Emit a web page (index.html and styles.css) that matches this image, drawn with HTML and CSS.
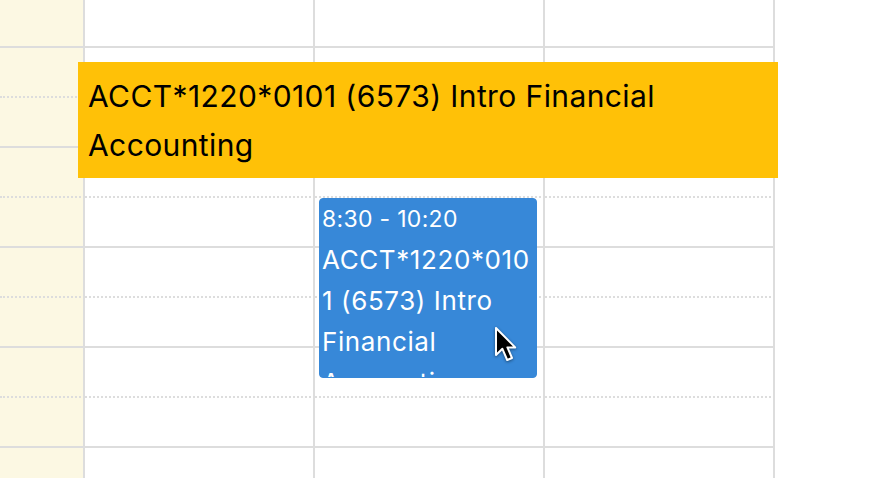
FILE: index.html
```html
<!DOCTYPE html>
<html lang="en">
<head>
<meta charset="utf-8">
<title>Calendar</title>
<link rel="stylesheet" href="styles.css">
</head>
<body>
<div class="viewport">
  <div class="grid">
    <div class="cell today"></div><div class="cell"></div><div class="cell"></div><div class="cell"></div>
    <div class="cell today minor"></div><div class="cell minor"></div><div class="cell minor"></div><div class="cell minor"></div>
    <div class="cell today"></div><div class="cell"></div><div class="cell"></div><div class="cell"></div>
    <div class="cell today minor"></div><div class="cell minor"></div><div class="cell minor"></div><div class="cell minor"></div>
    <div class="cell today"></div><div class="cell"></div><div class="cell"></div><div class="cell"></div>
    <div class="cell today minor"></div><div class="cell minor"></div><div class="cell minor"></div><div class="cell minor"></div>
    <div class="cell today"></div><div class="cell"></div><div class="cell"></div><div class="cell"></div>
    <div class="cell today minor"></div><div class="cell minor"></div><div class="cell minor"></div><div class="cell minor"></div>
    <div class="cell today"></div><div class="cell"></div><div class="cell"></div><div class="cell"></div>
    <div class="cell today minor"></div><div class="cell minor"></div><div class="cell minor"></div><div class="cell minor"></div>
  </div>

  <div class="mirror">ACCT*1220*0101 (6573) Intro Financial Accounting</div>

  <div class="event">
    <div class="time">8:30 - 10:20</div>
    <div class="title">ACCT*1220*0101 (6573) Intro Financial Accounting</div>
  </div>

  <svg class="cursor" width="26" height="38" viewBox="-3 -3 26 38" aria-hidden="true">
    <path d="M0 0 L0 27 L6.4 20.8 L11.2 32 L16 30 L11.4 19.4 L19.2 19.4 Z" fill="#000" stroke="#fff" stroke-width="2" stroke-linejoin="round"/>
  </svg>
</div>
</body>
</html>
```

FILE: styles.css
```css
* { box-sizing: border-box; }

html, body {
  margin: 0;
  padding: 0;
  background: #fff;
}

body {
  font-family: Inter, "Noto Sans", "DejaVu Sans", sans-serif;
  font-feature-settings: "calt" 0;
}

.viewport {
  position: relative;
  width: 870px;
  height: 478px;
  overflow: hidden;
  background: #fff;
}

.grid {
  display: grid;
  grid-template-columns: 85px 230px 230px 230px;
  width: 775px;
  margin-top: -2px;
}

.cell {
  height: 50px;
  border-right: 2px solid #dddddd;
  border-bottom: 2px solid #dddddd;
}

.cell.minor {
  border-bottom-style: dotted;
}

.cell.today {
  background: #fcf8e3;
}

.mirror {
  position: absolute;
  left: 78px;
  top: 62px;
  width: 700px;
  height: 116px;
  padding: 10px 10px 6px;
  background: #ffc107;
  color: #000;
  font-size: 30px;
  letter-spacing: 0.4px;
  line-height: 49px;
}

.event {
  position: absolute;
  left: 319px;
  top: 198px;
  width: 218px;
  height: 180px;
  padding: 0 2px;
  border: 1px solid #3788d8;
  border-radius: 4px;
  background: #3788d8;
  color: #fff;
  overflow: hidden;
}

.time {
  font-size: 23px;
  letter-spacing: 0.3px;
  line-height: 40px;
  white-space: nowrap;
}

.title {
  font-size: 26px;
  letter-spacing: 0.6px;
  line-height: 41px;
  overflow-wrap: anywhere;
}

.cursor {
  position: absolute;
  left: 493px;
  top: 325px;
  filter: drop-shadow(0 1px 1.5px rgba(0,0,0,0.45));
}
```
